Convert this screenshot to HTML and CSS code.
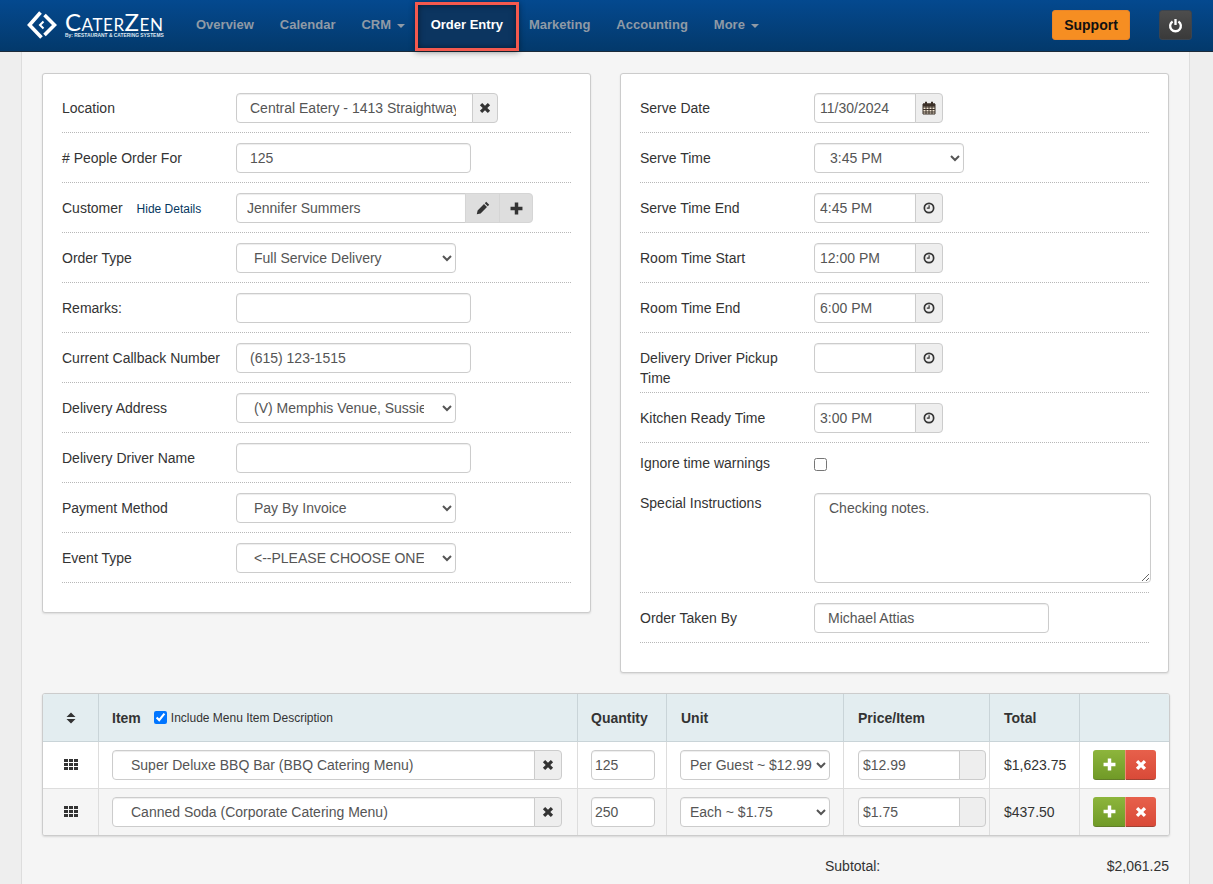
FILE: index.html
```html
<!DOCTYPE html>
<html lang="en">
<head>
<meta charset="utf-8">
<title>CaterZen - Order Entry</title>
<link rel="stylesheet" href="styles.css">
</head>
<body>
<svg class="defs" width="0" height="0" aria-hidden="true">
  <symbol id="i-x" viewBox="0 0 12 12"><path d="M3.2 .9 6 3.7 8.8 .9 11.1 3.2 8.3 6 11.1 8.8 8.8 11.1 6 8.3 3.2 11.1 .9 8.8 3.7 6 .9 3.2Z"/></symbol>
  <symbol id="i-plus" viewBox="0 0 12 12"><path d="M4.4 .5H7.6V4.4H11.5V7.6H7.6V11.5H4.4V7.6H.5V4.4H4.4Z"/></symbol>
  <symbol id="i-pencil" viewBox="0 0 14 14"><path d="M10.2 .8 13.2 3.8 11.8 5.2 8.8 2.2ZM8 3 11 6 4.6 12.4 .8 13.2 1.6 9.4Z"/></symbol>
  <symbol id="i-clock" viewBox="0 0 12 12"><path fill-rule="evenodd" d="M6 .5a5.5 5.5 0 1 1 0 11 5.5 5.5 0 0 1 0-11Zm0 1.7a3.8 3.8 0 1 0 0 7.6 3.8 3.8 0 0 0 0-7.6Z"/><path d="M5.5 3.2H6.7V6.7H3.8V5.6H5.5Z"/></symbol>
  <symbol id="i-grid" viewBox="0 0 14 11"><path d="M0 0H4V3H0ZM5 0H9V3H5ZM10 0H14V3H10ZM0 4H4V7H0ZM5 4H9V7H5ZM10 4H14V7H10ZM0 8H4V11H0ZM5 8H9V11H5ZM10 8H14V11H10Z"/></symbol>
</svg>

<header class="navbar">
  <a class="brand" href="#">
    <svg class="brand-mark" viewBox="0 0 30 30" aria-hidden="true">
      <path class="mark-line" d="M13.5 2.5 2.5 15 14.5 27.5"/>
      <path class="mark-line" d="M17.5 5 27.5 15 17.5 25"/>
      <path class="mark-thin" d="M16.5 11.5 13 15 16.5 18.5"/>
    </svg>
    <span class="brand-text">
      <span class="brand-name">CaterZen</span>
      <span class="brand-sub">By: RESTAURANT &amp; CATERING SYSTEMS</span>
    </span>
  </a>
  <nav class="nav-links">
    <a class="nav-link" href="#">Overview</a>
    <a class="nav-link" href="#">Calendar</a>
    <a class="nav-link" href="#">CRM <span class="caret"></span></a>
    <a class="nav-link is-active" href="#">Order Entry</a>
    <a class="nav-link" href="#">Marketing</a>
    <a class="nav-link" href="#">Accounting</a>
    <a class="nav-link" href="#">More <span class="caret"></span></a>
  </nav>
  <button class="btn-support" type="button">Support</button>
  <button class="btn-power" type="button" aria-label="Log out">
    <svg class="icon-power" viewBox="0 0 14 14" aria-hidden="true"><path d="M4.3 3.2A5 5 0 1 0 9.7 3.2"/><path d="M7 1V6.5"/></svg>
  </button>
</header>

<main class="page">
  <div class="panels">
    <section class="panel">
      <div class="row">
        <label class="row-label">Location</label>
        <div class="group">
          <input class="field field-location" value="Central Eatery - 1413 Straightway Ave">
          <span class="addon addon-loc"><svg class="ico ico-x"><use href="#i-x"/></svg></span>
        </div>
      </div>
      <div class="row">
        <label class="row-label"># People Order For</label>
        <input class="field field-wide" value="125">
      </div>
      <div class="row">
        <label class="row-label">Customer <a class="hide-link" href="#">Hide Details</a></label>
        <div class="group">
          <input class="field field-customer" value="Jennifer Summers">
          <span class="addon addon-btn"><svg class="ico ico-pencil"><use href="#i-pencil"/></svg></span>
          <span class="addon addon-btn addon-end"><svg class="ico ico-plus"><use href="#i-plus"/></svg></span>
        </div>
      </div>
      <div class="row">
        <label class="row-label">Order Type</label>
        <select class="pick pick-wide"><option>Full Service Delivery</option></select>
      </div>
      <div class="row">
        <label class="row-label">Remarks:</label>
        <input class="field field-wide">
      </div>
      <div class="row">
        <label class="row-label">Current Callback Number</label>
        <input class="field field-wide" value="(615) 123-1515">
      </div>
      <div class="row">
        <label class="row-label">Delivery Address</label>
        <select class="pick pick-wide"><option>(V) Memphis Venue, Sussie Lane</option></select>
      </div>
      <div class="row">
        <label class="row-label">Delivery Driver Name</label>
        <input class="field field-wide">
      </div>
      <div class="row">
        <label class="row-label">Payment Method</label>
        <select class="pick pick-wide"><option>Pay By Invoice</option></select>
      </div>
      <div class="row">
        <label class="row-label">Event Type</label>
        <select class="pick pick-wide"><option>&lt;--PLEASE CHOOSE ONE--&gt;</option></select>
      </div>
    </section>

    <section class="panel">
      <div class="row">
        <label class="row-label">Serve Date</label>
        <div class="group">
          <input class="field field-time" value="11/30/2024">
          <span class="addon addon-icon">
            <svg class="ico-cal" viewBox="0 0 14 14" aria-hidden="true">
              <path class="cal-body" d="M1 3H13V13H1Z"/>
              <path class="cal-grid" d="M1 6H13M1 8.5H13M1 11H13M4 5V13M7 5V13M10 5V13"/>
              <path class="cal-top" d="M1 2.5H13V5.5H1ZM3 .8H5V3H3ZM9 .8H11V3H9Z"/>
            </svg>
          </span>
        </div>
      </div>
      <div class="row">
        <label class="row-label">Serve Time</label>
        <select class="pick pick-time"><option>3:45 PM</option></select>
      </div>
      <div class="row">
        <label class="row-label">Serve Time End</label>
        <div class="group">
          <input class="field field-time" value="4:45 PM">
          <span class="addon addon-icon"><svg class="ico ico-clock"><use href="#i-clock"/></svg></span>
        </div>
      </div>
      <div class="row">
        <label class="row-label">Room Time Start</label>
        <div class="group">
          <input class="field field-time" value="12:00 PM">
          <span class="addon addon-icon"><svg class="ico ico-clock"><use href="#i-clock"/></svg></span>
        </div>
      </div>
      <div class="row">
        <label class="row-label">Room Time End</label>
        <div class="group">
          <input class="field field-time" value="6:00 PM">
          <span class="addon addon-icon"><svg class="ico ico-clock"><use href="#i-clock"/></svg></span>
        </div>
      </div>
      <div class="row">
        <label class="row-label">Delivery Driver Pickup Time</label>
        <div class="group">
          <input class="field field-time">
          <span class="addon addon-icon"><svg class="ico ico-clock"><use href="#i-clock"/></svg></span>
        </div>
      </div>
      <div class="row">
        <label class="row-label">Kitchen Ready Time</label>
        <div class="group">
          <input class="field field-time" value="3:00 PM">
          <span class="addon addon-icon"><svg class="ico ico-clock"><use href="#i-clock"/></svg></span>
        </div>
      </div>
      <div class="row row-check">
        <label class="row-label">Ignore time warnings</label>
        <input class="check" type="checkbox">
      </div>
      <div class="row row-notes">
        <label class="row-label">Special Instructions</label>
        <textarea class="notes">Checking notes.</textarea>
      </div>
      <div class="row">
        <label class="row-label">Order Taken By</label>
        <input class="field field-wide" value="Michael Attias">
      </div>
    </section>
  </div>

  <div class="lines">
    <table class="lines-table">
      <colgroup>
        <col class="c-drag"><col class="c-item"><col class="c-qty"><col class="c-unit"><col class="c-price"><col class="c-total"><col class="c-act">
      </colgroup>
      <thead>
        <tr>
          <th class="cell-center">
            <svg class="ico-sort" viewBox="0 0 10 12" aria-hidden="true"><path d="M5 .5 9.5 5H.5ZM.5 7H9.5L5 11.5Z"/></svg>
          </th>
          <th>
            <span class="item-head">
              Item
              <label class="desc-toggle"><input class="desc-check" type="checkbox" checked>Include Menu Item Description</label>
            </span>
          </th>
          <th>Quantity</th>
          <th class="cell-shift">Unit</th>
          <th class="cell-shift">Price/Item</th>
          <th class="cell-shift">Total</th>
          <th></th>
        </tr>
      </thead>
      <tbody>
        <tr>
          <td class="cell-center"><svg class="ico ico-grid"><use href="#i-grid"/></svg></td>
          <td>
            <div class="group">
              <input class="field field-item" value="Super Deluxe BBQ Bar (BBQ Catering Menu)">
              <span class="addon addon-x"><svg class="ico ico-x"><use href="#i-x"/></svg></span>
            </div>
          </td>
          <td><input class="field field-qty" value="125"></td>
          <td><select class="pick pick-unit"><option>Per Guest ~ $12.99</option></select></td>
          <td class="cell-shift">
            <div class="group">
              <input class="field field-price" value="$12.99">
              <span class="addon addon-blank"></span>
            </div>
          </td>
          <td class="cell-total cell-shift">$1,623.75</td>
          <td>
            <div class="actions">
              <button class="act act-add" type="button" aria-label="Add"><svg class="ico ico-plus"><use href="#i-plus"/></svg></button>
              <button class="act act-del" type="button" aria-label="Remove"><svg class="ico ico-x"><use href="#i-x"/></svg></button>
            </div>
          </td>
        </tr>
        <tr class="row-alt">
          <td class="cell-center"><svg class="ico ico-grid"><use href="#i-grid"/></svg></td>
          <td>
            <div class="group">
              <input class="field field-item" value="Canned Soda (Corporate Catering Menu)">
              <span class="addon addon-x"><svg class="ico ico-x"><use href="#i-x"/></svg></span>
            </div>
          </td>
          <td><input class="field field-qty" value="250"></td>
          <td><select class="pick pick-unit"><option>Each ~ $1.75</option></select></td>
          <td class="cell-shift">
            <div class="group">
              <input class="field field-price" value="$1.75">
              <span class="addon addon-blank"></span>
            </div>
          </td>
          <td class="cell-total cell-shift">$437.50</td>
          <td>
            <div class="actions">
              <button class="act act-add" type="button" aria-label="Add"><svg class="ico ico-plus"><use href="#i-plus"/></svg></button>
              <button class="act act-del" type="button" aria-label="Remove"><svg class="ico ico-x"><use href="#i-x"/></svg></button>
            </div>
          </td>
        </tr>
      </tbody>
    </table>
  </div>

  <div class="totals">
    <span>Subtotal:</span>
    <span>$2,061.25</span>
  </div>
</main>
</body>
</html>
```

FILE: styles.css
```css
* { box-sizing: border-box; }

html, body {
  margin: 0;
  height: 884px;
  overflow: hidden;
}

body {
  background: #eeeeee;
  color: #333333;
  font-family: "Liberation Sans", Arial, sans-serif;
  font-size: 14px;
  line-height: 20px;
}

.defs { display: block; height: 0; }

/* Navbar */
.navbar {
  position: relative;
  display: flex;
  align-items: center;
  height: 52px;
  padding: 0 21px 1px 27px;
  background: linear-gradient(#04498f, #03396b);
  border-bottom: 1px solid #1c2b3a;
}

.brand {
  display: flex;
  align-items: center;
  gap: 8px;
  width: 156px;
  color: #ffffff;
  text-decoration: none;
}

.brand-mark { width: 30px; height: 30px; flex: none; }
.mark-line { fill: none; stroke: #ffffff; stroke-width: 3.6; }
.mark-thin { fill: none; stroke: #ffffff; stroke-width: 2; }

.brand-text { display: flex; flex-direction: column; }

.brand-name {
  font-family: Lato, "Liberation Sans", sans-serif;
  font-size: 24px;
  font-variant: small-caps;
  line-height: 22px;
  letter-spacing: .55px;
}

.brand-sub {
  font-size: 4.9px;
  font-weight: 700;
  line-height: 6px;
  white-space: nowrap;
  color: #dfe8f2;
}

.nav-links {
  display: flex;
  flex: 1;
  margin-top: 3px;
}

.nav-link {
  height: 43px;
  padding: 0 13px;
  color: #8f9aa6;
  font-size: 13px;
  font-weight: 700;
  line-height: 39px;
  text-decoration: none;
}

.nav-link.is-active {
  color: #ffffff;
  background: #0c3560;
  box-shadow: inset 0 0 6px rgba(0, 0, 0, .5), 0 0 0 3px #f5594e, 0 1px 6px 3px rgba(0, 0, 0, .45);
}

.caret {
  display: inline-block;
  margin-left: 2px;
  vertical-align: middle;
  border-top: 4px solid #8f9aa6;
  border-left: 4px solid transparent;
  border-right: 4px solid transparent;
}

.btn-support {
  width: 78px;
  height: 30px;
  margin-right: 29px;
  padding: 0;
  color: #111111;
  background: #f68e22;
  border: 1px solid #e9852a;
  border-radius: 3px;
  font: 700 14px "Liberation Sans", Arial, sans-serif;
}

.btn-power {
  display: flex;
  align-items: center;
  justify-content: center;
  width: 33px;
  height: 30px;
  padding: 0;
  background: linear-gradient(#4d4d4d, #3a3a3a);
  border: 1px solid #3a4450;
  border-radius: 3px;
}

.icon-power {
  width: 15px;
  height: 15px;
  fill: none;
  stroke: #ffffff;
  stroke-width: 2.2;
}

/* Page */
.page {
  width: 1169px;
  height: 860px;
  margin-left: 21px;
  padding: 21px 20px 0;
  background: #f5f5f5;
  border: 1px solid #dddddd;
  border-top: 0;
}

.panels {
  display: grid;
  grid-template-columns: 549px 549px;
  column-gap: 29px;
  align-items: start;
}

.panel {
  padding: 9px 19px 29px;
  background: #ffffff;
  border: 1px solid #cccccc;
  border-radius: 3px;
  box-shadow: 0 1px 2px rgba(0, 0, 0, .1);
}

.row {
  display: flex;
  align-items: flex-start;
  min-height: 50px;
  padding: 10px 0 4px;
  border-bottom: 1px dotted #b8b8b8;
}

.row-check {
  min-height: 40px;
  border-bottom: 0;
}

.row-label {
  flex: none;
  width: 174px;
  padding: 5px 8px 0 0;
}

.row-check .row-label,
.row-notes .row-label { padding-top: 0; }

.hide-link {
  margin-left: 10px;
  color: #06385f;
  font-size: 12px;
  text-decoration: none;
}

.group { display: flex; margin-bottom: 5px; }

.field,
.pick,
.notes {
  height: 30px;
  margin: 0 0 5px;
  color: #555555;
  background: #ffffff;
  border: 1px solid #cccccc;
  border-radius: 4px;
  box-shadow: inset 0 1px 1px rgba(0, 0, 0, .075);
  font: 14px "Liberation Sans", Arial, sans-serif;
}

.field { flex: none; padding: 0 13px; }
.group .field {
  margin-bottom: 0;
  border-top-right-radius: 0;
  border-bottom-right-radius: 0;
}

.pick { padding: 0 15px 0 13px; }

.field-wide { width: 235px; }
.group .field-location { width: 237px; padding: 0 16px 0 13px; }
.field-customer { width: 230px; padding: 0 10px; }
.field-time { width: 102px; padding: 0 5px; }
.field-item { width: 423px; padding: 0 18px; }
.field-qty { width: 64px; padding: 0 3px; }
.field-price { width: 102px; padding: 0 4px; }

.pick-wide { width: 220px; }
.pick-time { width: 150px; padding-left: 11px; }
.pick-unit { width: 150px; padding: 0 0 0 5px; }

.addon {
  display: flex;
  flex: none;
  align-items: center;
  justify-content: center;
  height: 30px;
  margin-left: -1px;
  background: #eeeeee;
  border: 1px solid #cccccc;
  border-radius: 0 4px 4px 0;
}

.addon-x { width: 28px; }
.addon-loc { width: 26px; }
.addon-icon { width: 28px; }
.addon-blank { width: 27px; }

.addon-btn {
  width: 35px;
  background: #dedede;
  border-color: #d5d5d5;
  border-radius: 0;
}

.addon-end { width: 34px; border-radius: 0 4px 4px 0; }

.ico { display: block; fill: #333333; }
.ico-x { width: 12px; height: 12px; }
.ico-plus { width: 13px; height: 13px; }
.ico-pencil { width: 14px; height: 14px; }
.ico-clock { width: 12px; height: 12px; }
.ico-grid { width: 14px; height: 11px; margin: 0 auto; }

.ico-cal { width: 14px; height: 14px; }
.cal-body { fill: #f3e7d5; stroke: #3b3028; stroke-width: 1; }
.cal-grid { fill: none; stroke: #3b3028; stroke-width: 1; }
.cal-top { fill: #3b3028; }

.check {
  width: 13px;
  height: 13px;
  margin: 5px 0 0;
}

.notes {
  display: block;
  flex: none;
  width: 337px;
  height: 90px;
  padding: 6px 14px;
  resize: both;
}

/* Line items */
.lines {
  width: 1128px;
  margin-top: 20px;
  background: #ffffff;
  border: 1px solid #cccccc;
  border-radius: 3px;
  box-shadow: 0 1px 2px rgba(0, 0, 0, .12);
  overflow: hidden;
}

.lines-table {
  width: 1126px;
  table-layout: fixed;
  border-collapse: separate;
  border-spacing: 0;
}

.c-drag { width: 56px; }
.c-item { width: 479px; }
.c-qty { width: 89px; }
.c-unit { width: 177px; }
.c-price { width: 146px; }
.c-total { width: 90px; }
.c-act { width: 89px; }

.lines-table th {
  height: 48px;
  padding: 0 13px;
  text-align: left;
  background: #e3edf0;
  border-right: 1px solid #c9d4d8;
  border-bottom: 1px solid #c9d4d8;
  font-weight: 700;
}

.lines-table td {
  height: 47px;
  padding: 8px 13px 0;
  vertical-align: top;
  border-right: 1px solid #dddddd;
  border-bottom: 1px solid #dddddd;
}

.lines-table th:last-child,
.lines-table td:last-child { border-right: 0; }

.lines-table .row-alt td {
  height: 46px;
  background: #f5f5f5;
  border-bottom: 0;
}

.lines-table .cell-center {
  padding: 0;
  text-align: center;
}

.lines-table td.cell-center { padding-top: 17px; }

.lines-table .cell-shift {
  padding-left: 14px;
  padding-right: 0;
}

.lines-table .cell-total {
  padding-top: 13px;
}

.ico-sort { display: block; width: 10px; height: 12px; margin: 0 auto; fill: #333333; }

.item-head { display: flex; align-items: center; }

.desc-toggle {
  display: flex;
  align-items: center;
  margin-left: 13px;
  font-size: 12px;
  font-weight: 400;
}

.desc-check { width: 13px; height: 13px; margin: 0 4px 0 0; }

.lines-table .field,
.lines-table .pick { margin-bottom: 0; }
.lines-table .group { margin-bottom: 0; }

.actions { display: flex; }

.act {
  display: flex;
  align-items: center;
  justify-content: center;
  height: 30px;
  padding: 0;
  border: 0;
  border-bottom: 1px solid rgba(0, 0, 0, .3);
}

.act .ico { fill: #ffffff; }

.act-add {
  width: 32px;
  background: linear-gradient(#8db53c, #709a27);
  border-radius: 3px 0 0 3px;
}

.act-del {
  width: 31px;
  background: linear-gradient(#e7604b, #d94a38);
  border-left: 1px solid #f08a78;
  border-radius: 0 3px 3px 0;
}

.totals {
  display: flex;
  justify-content: space-between;
  width: 1127px;
  margin-top: 20px;
  padding-left: 783px;
}
```
